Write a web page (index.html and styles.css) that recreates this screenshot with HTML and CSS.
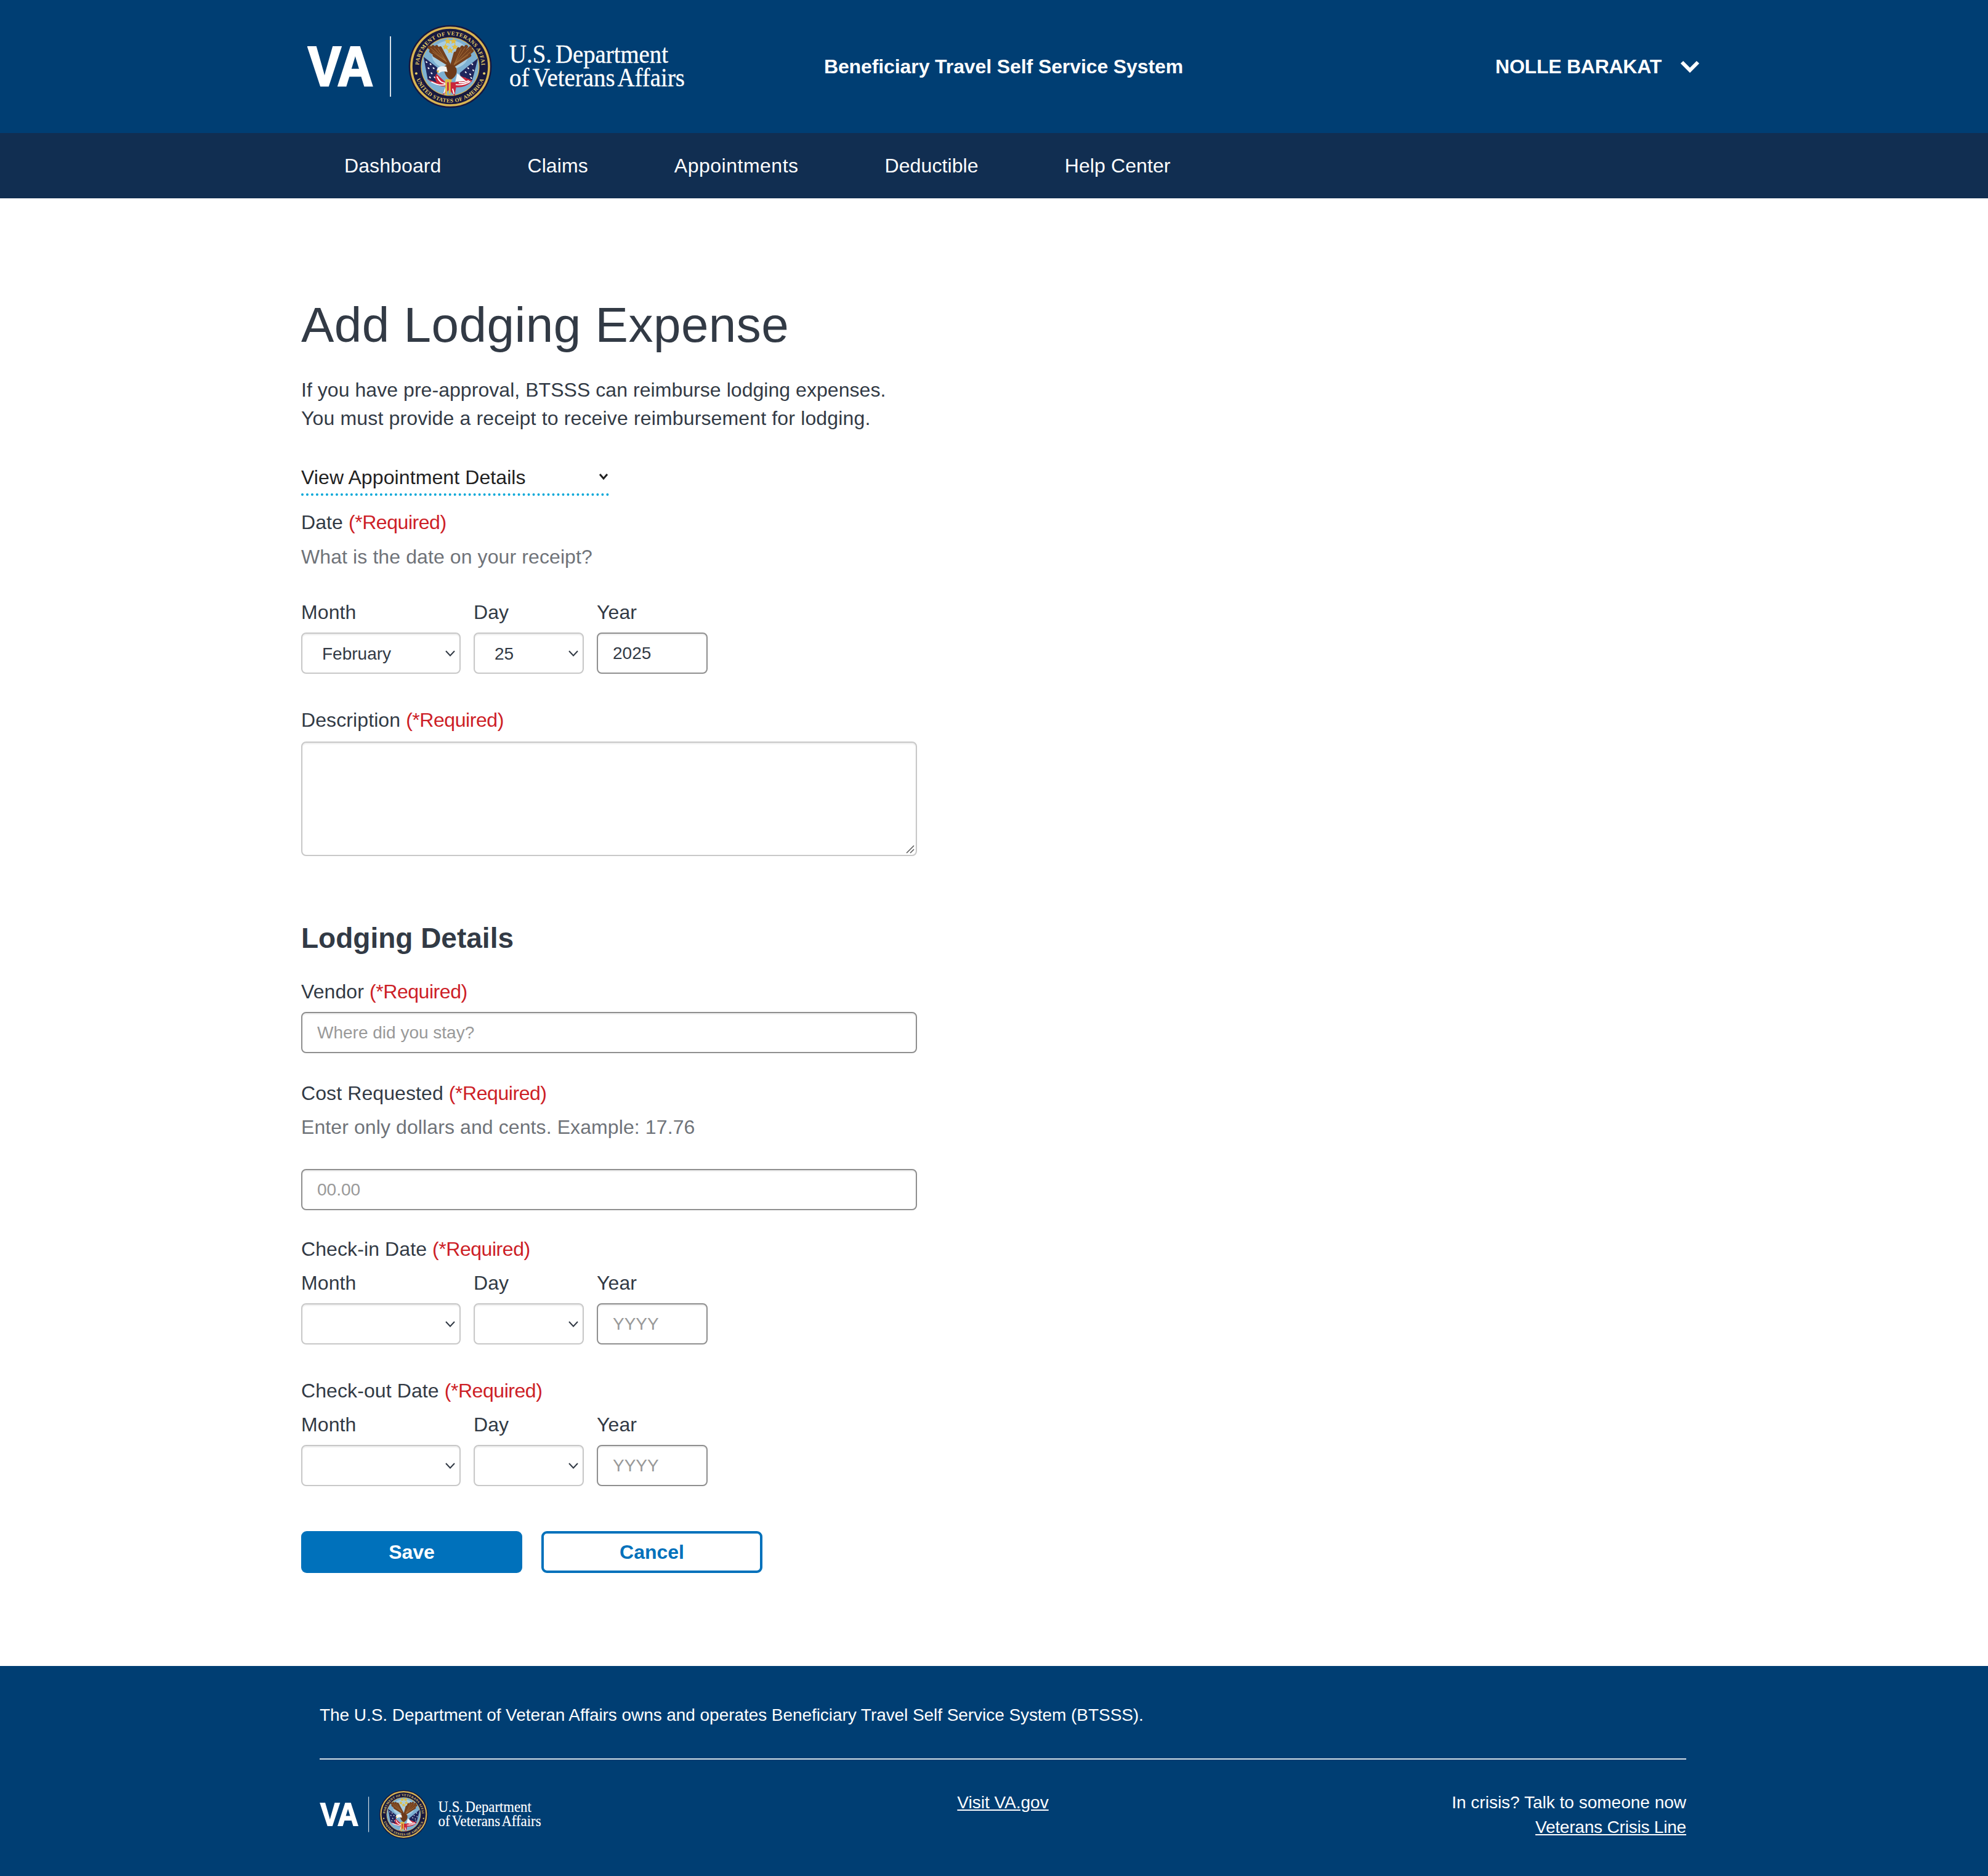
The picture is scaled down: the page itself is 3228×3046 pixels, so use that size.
FILE: index.html
```html
<!DOCTYPE html>
<html lang="en">
<head>
    <meta charset="UTF-8">
    <title>Add Lodging Expense</title>
    <link rel="stylesheet" href="styles.css">
</head>
<body>
    <header class="top-bar">
        <div class="top-inner">
            <svg class="logo" viewBox="0 0 613 140">
                <g id="va-logo">
                    <text x="1" y="101" class="logo-va" textLength="106" lengthAdjust="spacingAndGlyphs">VA</text>
                    <rect x="134" y="21" width="2" height="98" fill="#d5dfe8"/>
                    <g transform="translate(232 70) scale(0.33) translate(-243 -263)">
                        <circle cx="243" cy="263" r="204" fill="#17183f"/>
                        <circle cx="243" cy="263" r="191" fill="none" stroke="#d8b552" stroke-width="11"/>
                        <circle cx="243" cy="263" r="144" fill="#d8b552"/>
                        <circle cx="243" cy="263" r="140" fill="#7db0d2"/>
                        <ellipse cx="243" cy="205" rx="90" ry="70" fill="#a8cde2"/>
                        <path id="seal-top" d="M89 263 A154 154 0 0 1 397 263" fill="none"/>
                        <path id="seal-bot" d="M66 263 A177 177 0 0 0 420 263" fill="none"/>
                        <text class="seal-text"><textPath href="#seal-top" startOffset="50%">DEPARTMENT OF VETERANS AFFAIRS</textPath></text>
                        <text class="seal-text"><textPath href="#seal-bot" startOffset="50%">UNITED STATES OF AMERICA</textPath></text>
                        <circle cx="76" cy="297" r="6" fill="#e6cf6a"/>
                        <circle cx="410" cy="297" r="6" fill="#e6cf6a"/>
                        <path d="M231 122l5 11 11 1-8 7 3 11-11-6-10 6 2-11-8-7 11-1zM259 122l5 11 11 1-8 7 3 11-11-6-10 6 2-11-8-7 11-1zM220 150l5 11 11 1-8 7 3 11-11-6-10 6 2-11-8-7 11-1zM266 150l5 11 11 1-8 7 3 11-11-6-10 6 2-11-8-7 11-1zM243 168l5 11 11 1-8 7 3 11-11-6-10 6 2-11-8-7 11-1z" fill="#e2bd3f"/>
                        <path d="M112 215L180 268 176 345 132 325Z" fill="#20265c"/>
                        <path d="M380 222L290 295 300 340 352 330Z" fill="#20265c"/>
                        <path d="M125 240l3 3M145 250l3 3M160 270l3 3M135 270l3 3M150 295l3 3M165 315l3 3M142 315l3 3M350 250l3 3M330 270l3 3M355 280l3 3M318 290l3 3M340 300l3 3M315 320l3 3M345 318l3 3" stroke="#fff" stroke-width="6" stroke-linecap="round"/>
                        <path d="M130 325C165 350 200 365 222 360L205 405 238 378 265 408 272 365C305 368 335 355 352 332L295 310 270 340 220 340 175 298C165 315 168 330 178 342Z" fill="#c9263a"/>
                        <path d="M150 338C180 355 205 358 225 350M178 312C188 335 205 348 225 345M270 352C300 355 325 348 342 336M285 342C305 345 320 340 335 332M220 370L212 395M255 372L262 398" fill="none" stroke="#fff" stroke-width="6"/>
                        <path d="M278 296L322 335 268 338Z" fill="#f4f6f8"/>
                        <g fill="none" stroke="#74401e" stroke-width="17" stroke-linecap="round">
                            <path d="M236 252L140 168M236 252L158 166M236 252L176 166M236 252L194 172M236 252L148 188M236 252L165 208"/>
                            <path d="M250 264L350 186M250 264L342 172M250 264L322 165M250 264L302 168M250 264L284 176M250 264L268 198M250 264L338 208"/>
                        </g>
                        <g fill="none" stroke="#a9703a" stroke-width="3">
                            <path d="M225 240L146 172M225 240L164 170M225 240L182 172M225 240L156 190"/>
                            <path d="M262 254L345 190M262 254L336 176M262 254L316 170M262 254L298 174M262 254L332 206"/>
                        </g>
                        <path d="M212 268C225 245 255 250 272 270 282 292 268 318 245 328 228 322 212 298 212 268Z" fill="#6d3a1a"/>
                        <path d="M177 282C180 264 198 258 224 264L230 290C212 285 196 287 188 297Z" fill="#f4f4f2"/>
                        <path d="M175 284l13-3-4 15z" fill="#e0b02c"/>
                        <path d="M218 326h32v13h-32zM219 339h9v66h-9zM236 339h9v58h-9z" fill="#e2bd3f"/>
                    </g>
                    <text x="328" y="64" class="logo-word" textLength="258" lengthAdjust="spacingAndGlyphs">U.S. Department</text>
                    <text x="328" y="102" class="logo-word" textLength="285" lengthAdjust="spacingAndGlyphs">of Veterans Affairs</text>
                </g>
            </svg>
            <div class="system-name">Beneficiary Travel Self Service System</div>
            <div class="user-menu">
                <span class="user-name">NOLLE BARAKAT</span>
                <svg class="user-chevron" viewBox="0 0 32 20"><path d="M3 3L16 16 29 3" fill="none" stroke="#fff" stroke-width="6"/></svg>
            </div>
        </div>
    </header>

    <nav class="nav-bar">
        <a href="#">Dashboard</a>
        <a href="#">Claims</a>
        <a class="nav-appts" href="#">Appointments</a>
        <a href="#">Deductible</a>
        <a href="#">Help Center</a>
    </nav>

    <main class="content">
        <h1>Add Lodging Expense</h1>
        <p class="intro">If you have pre-approval, BTSSS can reimburse lodging expenses.<br><span class="intro-two">You must provide a receipt to receive reimbursement for lodging.</span></p>

        <div class="appt-toggle">
            <span>View Appointment Details</span>
            <svg class="appt-chevron" viewBox="0 0 16 12"><path d="M2 2L8 9 14 2" fill="none" stroke="#212121" stroke-width="3"/></svg>
        </div>

        <div class="label date-label">Date <span class="req">(*Required)</span></div>
        <div class="hint hint-date">What is the date on your receipt?</div>
        <div class="date-row row-receipt">
            <div class="date-col">
                <label class="label">Month</label>
                <select class="field month"><option>February</option></select>
            </div>
            <div class="date-col">
                <label class="label">Day</label>
                <select class="field day"><option>25</option></select>
            </div>
            <div class="date-col">
                <label class="label">Year</label>
                <input class="field year" type="text" value="2025" placeholder="YYYY">
            </div>
        </div>

        <label class="label desc-label">Description <span class="req">(*Required)</span></label>
        <div class="desc-wrap">
            <textarea class="desc"></textarea>
            <svg class="desc-grip" viewBox="0 0 14 14"><path d="M1 13L13 1M7 13L13 7" fill="none" stroke="#555" stroke-width="1.500"/></svg>
        </div>

        <h2>Lodging Details</h2>

        <label class="label vendor-label">Vendor <span class="req">(*Required)</span></label>
        <input class="field wide vendor" type="text" placeholder="Where did you stay?">

        <label class="label cost-label">Cost Requested <span class="req">(*Required)</span></label>
        <div class="hint hint-cost">Enter only dollars and cents. Example: 17.76</div>
        <input class="field wide cost" type="text" placeholder="00.00">

        <div class="label checkin-label">Check-in Date <span class="req">(*Required)</span></div>
        <div class="date-row row-stay">
            <div class="date-col">
                <label class="label">Month</label>
                <select class="field month"><option></option></select>
            </div>
            <div class="date-col">
                <label class="label">Day</label>
                <select class="field day"><option></option></select>
            </div>
            <div class="date-col">
                <label class="label">Year</label>
                <input class="field year" type="text" placeholder="YYYY">
            </div>
        </div>

        <div class="label checkout-label">Check-out Date <span class="req">(*Required)</span></div>
        <div class="date-row row-stay">
            <div class="date-col">
                <label class="label">Month</label>
                <select class="field month"><option></option></select>
            </div>
            <div class="date-col">
                <label class="label">Day</label>
                <select class="field day"><option></option></select>
            </div>
            <div class="date-col">
                <label class="label">Year</label>
                <input class="field year" type="text" placeholder="YYYY">
            </div>
        </div>

        <div class="actions">
            <button class="btn btn-save">Save</button>
            <button class="btn btn-cancel">Cancel</button>
        </div>
    </main>

    <footer class="foot">
        <div class="foot-inner">
            <p class="foot-note">The U.S. Department of Veteran Affairs owns and operates Beneficiary Travel Self Service System (BTSSS).</p>
            <div class="foot-row">
                <svg class="foot-logo" viewBox="0 0 613 140"><use href="#va-logo"/></svg>
                <a class="foot-visit" href="#">Visit VA.gov</a>
                <div class="foot-crisis">
                    In crisis? Talk to someone now<br>
                    <a class="foot-line" href="#">Veterans Crisis Line</a>
                </div>
            </div>
        </div>
    </footer>
</body>
</html>
```
FILE: styles.css
```css
html {margin: 0; padding: 0;}
body {margin: 0; font-family: "Liberation Sans", Arial, sans-serif; font-size: 32px; line-height: 46px; letter-spacing: .1px; color: #323a45; background: #fff;}

/* header */
.top-bar {background: #003e73; height: 216px; display: flex; align-items: center;}
.top-inner {margin-left: 499px; width: 2261px; display: grid; grid-template-columns: 1fr auto 1fr; align-items: center; color: #fff; font-weight: bold;}
.logo {width: 613px; height: 140px; display: block;}
.logo-va {font: bold 90px "Liberation Sans", sans-serif; fill: #fff; stroke: #fff; stroke-width: 3px; letter-spacing: 0;}
.logo-word {font: 42px "Liberation Serif", serif; fill: #fff; stroke: #fff; stroke-width: .3px; word-spacing: -4px; letter-spacing: 0;}
.seal-text {font: bold 27px "Liberation Serif", serif; fill: #e6cf6a; text-anchor: middle; letter-spacing: 1.5px;}
.system-name {letter-spacing: -.1px;}
.user-name {letter-spacing: -.25px;}
.user-menu {display: flex; justify-content: flex-end; align-items: center; gap: 30px;}
.user-chevron {width: 32px; height: 20px;}

.nav-bar {background: #112e51; height: 106px; padding-left: 489px; display: flex; align-items: center; letter-spacing: .1px;}
.nav-bar a {color: #fff; text-decoration: none; padding: 0 70px;}
.nav-bar .nav-appts {letter-spacing: .5px;}

/* form */
.content {padding: 162px 0 151px 489px;}
h1 {font-size: 80px; line-height: 88px; font-weight: normal; letter-spacing: .5px; margin: 0;}
h2 {font-size: 46px; line-height: 60px; font-weight: bold; letter-spacing: 0; margin: 103px 0 0;}
.intro {margin: 38px 0 0; letter-spacing: .05px;}
.intro-two {letter-spacing: .15px;}

.appt-toggle {width: 500px; height: 49px; margin-top: 50px; display: flex; justify-content: space-between; align-items: flex-start; color: #212121; border-bottom: 4px dotted #02a7d8;}
.appt-chevron {width: 16px; height: 12px; margin: 16px 1px 0 0;}

.label {display: block;}
.req {color: #cd2026; letter-spacing: -.45px;}
.hint {color: #6f7379;}
.date-label {margin-top: 20px;}
.hint-date {margin-top: 10px;}

.date-row {display: flex; gap: 21px;}
.row-receipt {margin-top: 44px;}
.date-col {display: flex; flex-direction: column;}
.row-receipt .field, .row-stay .field {margin-top: 10px;}
.row-stay {margin-top: 9px;}

.field {display: block; box-sizing: border-box; height: 67px; font-family: "Liberation Sans", Arial, sans-serif; font-size: 28px; letter-spacing: 0; color: #323a45; background-color: #fff; border: 2px solid #c8c8c8; border-radius: 8px; box-shadow: inset 0 2px 2px rgba(0, 0, 0, .075); outline: none;}
.field::placeholder {color: #999;}
input.field {border-color: #8f8f8f; padding: 0 24px;}
select.field {
    appearance: none;
    padding: 2px 40px 0 32px;
    background-image: url("data:image/svg+xml,%3Csvg xmlns='http://www.w3.org/2000/svg' width='16' height='10'%3E%3Cpath d='M1 1l7 7.500 7-7.500' fill='none' stroke='%23323a45' stroke-width='2'/%3E%3C/svg%3E");
    background-repeat: no-repeat;
    background-position: right 7px center;
}
.month {width: 259px;}
.day {width: 179px;}
.year {width: 180px;}
.wide {width: 1000px;}

.desc-label {margin-top: 52px;}
.desc-wrap {position: relative; width: 1000px; height: 186px; margin-top: 12px;}
.desc {display: block; box-sizing: border-box; width: 100%; height: 100%; resize: none; border: 2px solid #c8c8c8; border-radius: 8px; box-shadow: inset 0 2px 2px rgba(0, 0, 0, .075); outline: none;}
.desc-grip {position: absolute; right: 4px; bottom: 4px; width: 14px; height: 14px; pointer-events: none;}

.vendor-label {margin-top: 34px;}
.vendor {margin-top: 10px;}
.cost-label {margin-top: 42px;}
.hint-cost {margin-top: 9px;}
.cost {margin-top: 45px;}
.checkin-label {margin-top: 40px;}
.checkout-label {margin-top: 52px;}

.actions {display: flex; gap: 31px; margin-top: 73px;}
.btn {box-sizing: border-box; width: 359px; height: 68px; border-radius: 9px; font-family: "Liberation Sans", Arial, sans-serif; font-size: 32px; font-weight: bold; cursor: pointer;}
.btn-save {background: #0071bb; color: #fff; border: none;}
.btn-cancel {background: #fff; color: #0071bb; border: 4px solid #0071bb;}

/* footer */
.foot {background: #003e73; height: 341px; color: #fff; font-size: 28px; letter-spacing: 0; box-sizing: border-box; padding-top: 57px;}
.foot-inner {margin-left: 519px; width: 2219px;}
.foot-note {margin: 0; padding-bottom: 47px; border-bottom: 2px solid #d5dfe8; letter-spacing: -.06px;}
.foot-row {display: grid; grid-template-columns: 1fr auto 1fr; margin-top: 48px; line-height: 40px;}
.foot-logo {width: 360px; height: 82px; display: block;}
.foot-row a {color: #fff;}
.foot-visit {align-self: start; margin-top: 2px;}
.foot-crisis {text-align: right; margin-top: 2px;}
.foot-line {letter-spacing: -.2px;}
```
